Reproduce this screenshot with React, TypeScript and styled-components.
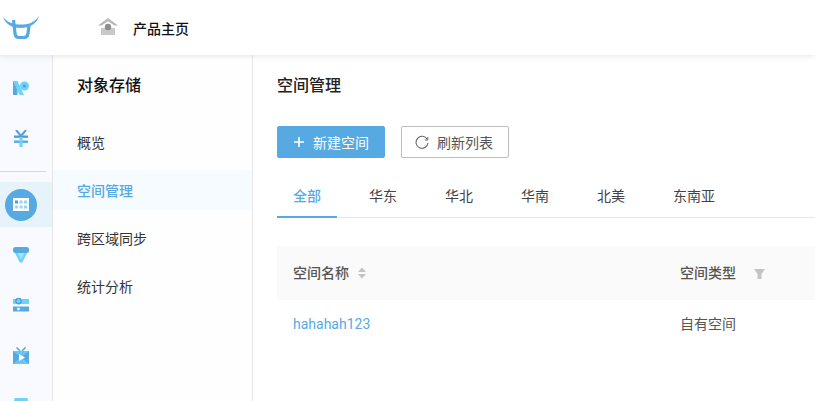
import React from "react";
import styled, { createGlobalStyle } from "styled-components";

const GlobalStyle = createGlobalStyle`
  html, body {
    margin: 0;
    padding: 0;
    height: 100%;
    overflow: hidden;
    background: #fff;
    font-family: Roboto, "Noto Sans CJK SC", sans-serif;
  }
`;

const Page = styled.div`
  width: 815px;
  height: 401px;
  display: flex;
  flex-direction: column;
  overflow: hidden;
`;

const Header = styled.header`
  height: 55px;
  flex: none;
  display: flex;
  align-items: center;
  background: #fff;
  box-shadow: 0 1px 6px rgba(0, 0, 0, 0.1);
  position: relative;
  z-index: 2;
`;

const LogoBox = styled.div`
  width: 98px;
  padding: 0 0 0 3px;
  box-sizing: border-box;
  display: flex;
`;

const HomeLink = styled.div`
  display: flex;
  align-items: center;
  gap: 15px;
  font-size: 14px;
  font-weight: 500;
  color: #111;
`;

const HomeSvg = styled.svg`
  margin-bottom: 2px;
`;

const Body = styled.div`
  flex: 1;
  display: flex;
  min-height: 0;
`;

const Rail = styled.nav`
  width: 53px;
  flex: none;
  box-sizing: border-box;
  background: #f8faff;
  border-right: 1px solid #e6e6e6;
  display: flex;
  flex-direction: column;
  align-items: stretch;
  padding-top: 8px;
`;

const RailItem = styled.div<{ $active?: boolean; $h?: number }>`
  height: ${(p) => p.$h ?? 50}px;
  flex: none;
  display: flex;
  align-items: center;
  justify-content: center;
  padding-right: 10px;
  background: ${(p) => (p.$active ? "#e6f3fb" : "transparent")};
  margin-bottom: ${(p) => (p.$active ? 3 : 0)}px;
`;

const RailDivider = styled.div`
  height: 1px;
  flex: none;
  background: #cfd8ee;
  margin: 8px 6px 10px 0;
`;

const ActiveCircle = styled.div`
  width: 32px;
  height: 32px;
  border-radius: 50%;
  background: #57a9e2;
  display: flex;
  align-items: center;
  justify-content: center;
`;

const Sidebar = styled.aside`
  width: 200px;
  flex: none;
  box-sizing: border-box;
  background: #fefefe;
  border-right: 1px solid #e8e8e8;
  padding-top: 19px;
`;

const SidebarTitle = styled.div`
  font-size: 16px;
  font-weight: 500;
  color: #111;
  padding-left: 24px;
  height: 22px;
  line-height: 24px;
  margin-bottom: 23px;
`;

const SidebarItem = styled.div<{ $active?: boolean }>`
  height: ${(p) => (p.$active ? 40 : 48)}px;
  line-height: ${(p) => (p.$active ? 42 : 48)}px;
  margin: ${(p) => (p.$active ? "3px 0 5px" : "0")};
  padding-left: 24px;
  font-size: 14px;
  font-weight: ${(p) => (p.$active ? 500 : 400)};
  color: ${(p) => (p.$active ? "#57a9e2" : "#333")};
  background: ${(p) => (p.$active ? "#f5fbff" : "transparent")};
`;

const Main = styled.main`
  flex: 1;
  min-width: 0;
  padding: 19px 0 0 24px;
  overflow: hidden;
`;

const PageTitle = styled.div`
  font-size: 16px;
  font-weight: 500;
  color: #222;
  height: 22px;
  line-height: 24px;
  margin-bottom: 30px;
`;

const Toolbar = styled.div`
  display: flex;
  gap: 16px;
  margin-bottom: 20px;
`;

const Button = styled.div<{ $primary?: boolean }>`
  width: 108px;
  height: 32px;
  box-sizing: border-box;
  border-radius: 2px;
  display: flex;
  align-items: center;
  justify-content: center;
  gap: 8px;
  font-size: 14px;
  padding-right: ${(p) => (p.$primary ? 0 : 2)}px;
  background: ${(p) => (p.$primary ? "#57a9e2" : "#fff")};
  color: ${(p) => (p.$primary ? "#fff" : "#555")};
  border: 1px solid ${(p) => (p.$primary ? "#57a9e2" : "#bdbdbd")};
`;

const Tabs = styled.div`
  display: flex;
  gap: 16px;
  height: 40px;
  box-sizing: border-box;
  border-bottom: 1px solid #e8e8e8;
  margin-bottom: 28px;
`;

const Tab = styled.div<{ $active?: boolean }>`
  padding: 8px 16px 0;
  height: 40px;
  box-sizing: border-box;
  line-height: 20px;
  font-size: 14px;
  color: ${(p) => (p.$active ? "#57a9e2" : "#444")};
  font-weight: ${(p) => (p.$active ? 500 : 400)};
  border-bottom: 2px solid ${(p) => (p.$active ? "#57a9e2" : "transparent")};
`;

const TableRow = styled.div<{ $head?: boolean }>`
  display: grid;
  grid-template-columns: 387px 1fr;
  align-items: center;
  box-sizing: border-box;
  padding: 0 0 2px 16px;
  height: ${(p) => (p.$head ? 54 : 48)}px;
  background: ${(p) => (p.$head ? "#fafafa" : "#fff")};
  font-size: 14px;
  font-weight: ${(p) => (p.$head ? 500 : 400)};
  color: ${(p) => (p.$head ? "#555" : "#555")};
`;

const HeadCell = styled.div<{ $gap: number }>`
  display: flex;
  align-items: center;
  gap: ${(p) => p.$gap}px;
`;

const HeadIcon = styled.svg<{ $drop: number }>`
  margin-top: ${(p) => p.$drop}px;
`;

const NameLink = styled.span`
  color: #57a9e2;
  padding-top: 2px;
`;

const Logo = () => (
  <svg width="36" height="23" viewBox="0 0 36 23" fill="none">
    <path d="M0 1 C5 7 11 8.5 18 8.5 C25 8.5 31 7 36 0 C34 8 26 12 18 12 C10 12 3 9 0 1 Z" fill="#57a9e2" />
    <path d="M10.5 4 L12 17.5 Q12.5 21.5 16 21.5 L21 21.5 Q24.5 21.5 25 17.5 L26 10" stroke="#57a9e2" strokeWidth="3.2" />
  </svg>
);

const HomeIcon = () => (
  <HomeSvg width="20" height="17" viewBox="0 0 20 17">
    <path d="M10 0 L20 7.5 L16.5 7.5 L10 3.2 L3.5 7.5 L0 7.5 Z" fill="#b8b8b8" />
    <rect x="3" y="10" width="14" height="7" fill="#c9c9c9" />
    <circle cx="10" cy="9" r="3.2" fill="#8d8d8d" />
  </HomeSvg>
);

const PlusIcon = () => (
  <svg width="12" height="12" viewBox="0 0 12 12">
    <path d="M6 1 V11 M1 6 H11" stroke="#fff" strokeWidth="1.6" />
  </svg>
);

const RefreshIcon = () => (
  <svg width="14" height="14" viewBox="0 0 14 14" fill="none">
    <path d="M12.2 4.2 A6 6 0 1 0 13 8" stroke="#666" strokeWidth="1.1" />
    <path d="M12.8 2 V5 H10" stroke="#666" strokeWidth="1" />
  </svg>
);

const SortIcon = () => (
  <HeadIcon $drop={2} width="8" height="12" viewBox="0 0 8 12">
    <path d="M4 0.5 L8 5 H0 Z" fill="#c4c4c4" />
    <path d="M4 11.5 L8 7 H0 Z" fill="#c4c4c4" />
  </HeadIcon>
);

const FilterIcon = () => (
  <HeadIcon $drop={4} width="11" height="10" viewBox="0 0 11 10">
    <path d="M0 0 H11 L7.5 5 V10 H3.5 V5 Z" fill="#c4c4c4" />
  </HeadIcon>
);

const RailIcon1 = () => (
  <svg width="16" height="14" viewBox="0 0 16 14">
    <rect x="0" y="0" width="4.5" height="14" fill="#57a9e2" />
    <path d="M0 0 H4.5 L11 14 H6.5 Z" fill="#6fd2fb" />
    <circle cx="11.5" cy="5" r="4.5" fill="#6fd2fb" />
    <circle cx="11.5" cy="5" r="1.6" fill="#4f9ed8" />
  </svg>
);

const RailIcon2 = () => (
  <svg width="14" height="17" viewBox="0 0 14 17">
    <path d="M2 0 L7 6 L12 0" stroke="#4f9ed8" strokeWidth="2" fill="none" />
    <rect x="0" y="5.5" width="14" height="2.4" fill="#4f9ed8" />
    <rect x="0" y="10.5" width="14" height="2.4" fill="#57a9e2" />
    <rect x="5.4" y="7" width="3.2" height="10" fill="#6fd2fb" />
  </svg>
);

const RailIcon3 = () => (
  <svg width="16" height="13" viewBox="0 0 16 13">
    <rect width="16" height="13" fill="#fff" />
    {[2, 6.5, 11].map((x) =>
      [2.5, 7.5].map((y) => (
        <rect key={`${x}-${y}`} x={x} y={y} width="3" height="3" fill={x === 2 && y === 2.5 ? "#4f9ed8" : "#8fd8f8"} />
      ))
    )}
  </svg>
);

const RailIcon4 = () => (
  <svg width="16" height="16" viewBox="0 0 16 16">
    <path d="M1.5 5 H14.5 L9.5 15 Q8 16.5 6.5 15 Z" fill="#6fd2fb" />
    <path d="M4 5 H12 L8 13 Z" fill="#9fe2fc" />
    <rect x="0" y="0" width="16" height="6" rx="2.5" fill="#57a9e2" />
  </svg>
);

const RailIcon5 = () => (
  <svg width="16" height="14" viewBox="0 0 16 14">
    <rect x="0" y="1" width="16" height="5" fill="#6fd2fb" />
    <rect x="0" y="8.5" width="16" height="5" fill="#57a9e2" />
    <circle cx="5.5" cy="3" r="2.7" fill="#6fd2fb" stroke="#4f9ed8" strokeWidth="1.4" />
    <circle cx="5.5" cy="11" r="1.4" fill="#e4f6ff" />
  </svg>
);

const RailIcon6 = () => (
  <svg width="16" height="17" viewBox="0 0 16 17">
    <path d="M3.5 0.5 L7 4 M12.5 0.5 L9 4" stroke="#57a9e2" strokeWidth="1.6" />
    <rect x="0" y="4" width="16" height="13" fill="#6cc4f2" />
    <path d="M0 4 L8 10 L16 4 V17 L8 10 L0 17 Z" fill="#57a9e2" />
    <path d="M6 7 L12 10.5 L6 14 Z" fill="#fff" />
  </svg>
);

const RailIcon7 = () => (
  <svg width="18" height="8" viewBox="0 0 18 8">
    <path d="M2 3 H16 L18 8 H0 Z" fill="#57a9e2" />
    <path d="M2.5 0 H15.5 L16 3 H2 Z" fill="#6fd2fb" />
  </svg>
);

const regions = ["全部", "华东", "华北", "华南", "北美", "东南亚"];
const menu = ["概览", "空间管理", "跨区域同步", "统计分析"];

export default function App() {
  return (
    <Page>
      <GlobalStyle />
      <Header>
        <LogoBox>
          <Logo />
        </LogoBox>
        <HomeLink>
          <HomeIcon />
          产品主页
        </HomeLink>
      </Header>
      <Body>
        <Rail>
          <RailItem><RailIcon1 /></RailItem>
          <RailItem><RailIcon2 /></RailItem>
          <RailDivider />
          <RailItem $active $h={45}>
            <ActiveCircle><RailIcon3 /></ActiveCircle>
          </RailItem>
          <RailItem><RailIcon4 /></RailItem>
          <RailItem><RailIcon5 /></RailItem>
          <RailItem><RailIcon6 /></RailItem>
          <RailItem $h={44}><RailIcon7 /></RailItem>
        </Rail>
        <Sidebar>
          <SidebarTitle>对象存储</SidebarTitle>
          {menu.map((m) => (
            <SidebarItem key={m} $active={m === "空间管理"}>{m}</SidebarItem>
          ))}
        </Sidebar>
        <Main>
          <PageTitle>空间管理</PageTitle>
          <Toolbar>
            <Button $primary><PlusIcon />新建空间</Button>
            <Button><RefreshIcon />刷新列表</Button>
          </Toolbar>
          <Tabs>
            {regions.map((r) => (
              <Tab key={r} $active={r === "全部"}>{r}</Tab>
            ))}
          </Tabs>
          <TableRow $head>
            <HeadCell $gap={9}>空间名称 <SortIcon /></HeadCell>
            <HeadCell $gap={18}>空间类型 <FilterIcon /></HeadCell>
          </TableRow>
          <TableRow>
            <NameLink>hahahah123</NameLink>
            <span>自有空间</span>
          </TableRow>
        </Main>
      </Body>
    </Page>
  );
}
